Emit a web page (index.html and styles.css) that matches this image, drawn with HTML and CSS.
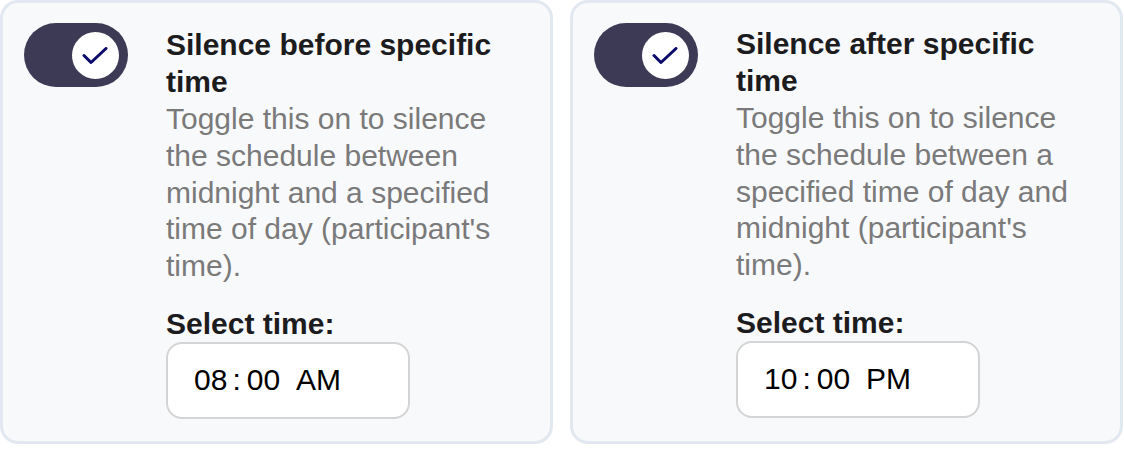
FILE: index.html
```html
<!DOCTYPE html>
<html lang="en">
<head>
<meta charset="utf-8">
<title>Silence settings</title>
<link rel="stylesheet" href="styles.css">
</head>
<body>
<div class="grid">
  <section class="card">
    <div class="toggle">
      <span class="knob">
        <svg width="26" height="18" viewBox="0 0 26 18"><path d="M2 8.5 L9 15.5 L24 1.5" fill="none" stroke="#0a0a6b" stroke-width="3" stroke-linecap="round" stroke-linejoin="round"/></svg>
      </span>
    </div>
    <div class="content">
      <h2 class="title">Silence before specific time</h2>
      <p class="desc">Toggle this on to silence the schedule between midnight and a specified time of day (participant's time).</p>
      <div class="label">Select time:</div>
      <div class="time"><span class="hh">08</span><span class="colon">:</span><span class="mm">00</span><span class="ampm">AM</span></div>
    </div>
  </section>
  <section class="card second">
    <div class="toggle">
      <span class="knob">
        <svg width="26" height="18" viewBox="0 0 26 18"><path d="M2 8.5 L9 15.5 L24 1.5" fill="none" stroke="#0a0a6b" stroke-width="3" stroke-linecap="round" stroke-linejoin="round"/></svg>
      </span>
    </div>
    <div class="content">
      <h2 class="title">Silence after specific time</h2>
      <p class="desc">Toggle this on to silence the schedule between a specified time of day and midnight (participant's time).</p>
      <div class="label">Select time:</div>
      <div class="time"><span class="hh">10</span><span class="colon">:</span><span class="mm">00</span><span class="ampm">PM</span></div>
    </div>
  </section>
</div>
</body>
</html>
```
FILE: styles.css
```css
* { box-sizing: border-box; }
html, body { margin: 0; padding: 0; background: #ffffff; }
body {
  font-family: "Liberation Sans", Arial, Helvetica, sans-serif;
  width: 1124px;
  height: 464px;
  overflow: hidden;
}
.grid {
  display: grid;
  grid-template-columns: 553px 553px;
  column-gap: 17px;
  padding: 0;
}
.card {
  height: 444px;
  background: #f8f9fb;
  border: 3px solid #e2e8f0;
  border-radius: 18px;
  padding: 20px 21px 20px 21px;
  display: flex;
  align-items: flex-start;
  gap: 38px;
}
.second .content { padding-top: 2px; }
.toggle {
  flex: none;
  width: 104px;
  height: 64px;
  border-radius: 32px;
  background: #3d3a55;
  display: flex;
  align-items: center;
  justify-content: flex-end;
  padding-right: 9px;
}
.knob {
  width: 47px;
  height: 47px;
  border-radius: 50%;
  background: #ffffff;
  display: flex;
  align-items: center;
  justify-content: center;
}
.knob svg { display: block; margin-left: -2px; margin-top: 1px; }
.content {
  width: 350px;
  padding-top: 3px;
}
.title {
  margin: 0;
  font-size: 30px;
  line-height: 37px;
  font-weight: 700;
  color: #1c1c1f;
}
.desc {
  margin: 1px 0 0 0;
  font-size: 30px;
  line-height: 36.8px;
  color: #7a7a7a;
}
.label {
  margin-top: 20px;
  font-size: 30px;
  line-height: 37px;
  font-weight: 700;
  color: #1c1c1f;
}
.time {
  width: 244px;
  height: 77px;
  background: #ffffff;
  border: 2px solid #d4d4d4;
  border-radius: 16px;
  display: flex;
  align-items: center;
  padding-left: 26px;
  font-size: 30px;
  color: #000000;
}
.colon { margin: 0 6px 0 5px; }
.ampm { margin-left: 16px; }
```
